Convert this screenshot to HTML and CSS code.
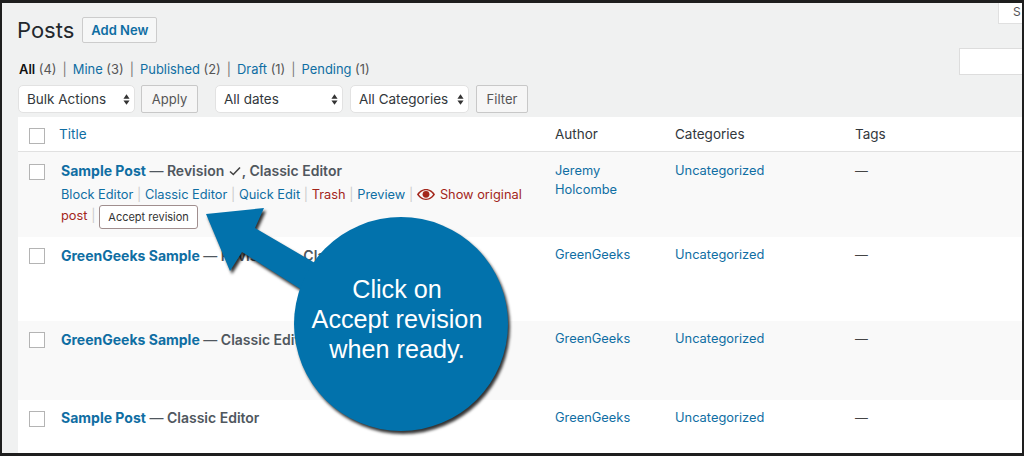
FILE: index.html
```html
<!DOCTYPE html>
<html lang="en">
<head>
<meta charset="utf-8">
<title>Posts</title>
<link rel="stylesheet" href="styles.css">
</head>
<body>
<div class="frame">
  <header class="pagehead">
    <h1 class="title">Posts</h1>
    <a class="addnew">Add New</a>
    <div class="screentab">S</div>
  </header>
  <div class="viewsrow">
    <ul class="views">
      <li><b>All</b> <span class="n">(4)</span></li><li class="pipe">|</li>
      <li><a>Mine</a> <span class="n">(3)</span></li><li class="pipe">|</li>
      <li><a>Published</a> <span class="n">(2)</span></li><li class="pipe">|</li>
      <li><a>Draft</a> <span class="n">(1)</span></li><li class="pipe">|</li>
      <li><a>Pending</a> <span class="n">(1)</span></li>
    </ul>
    <div class="searchbox"></div>
  </div>
  <div class="tablenav">
    <div class="select w-bulk">Bulk Actions<svg class="updown" viewBox="0 0 8 14"><path d="M4 1 7.500 6h-7zM4 13 .5 8h7z"/></svg></div>
    <div class="btn w-apply">Apply</div>
    <div class="select w-dates">All dates<svg class="updown" viewBox="0 0 8 14"><path d="M4 1 7.500 6h-7zM4 13 .5 8h7z"/></svg></div>
    <div class="select w-cats">All Categories<svg class="updown" viewBox="0 0 8 14"><path d="M4 1 7.500 6h-7zM4 13 .5 8h7z"/></svg></div>
    <div class="btn w-filter">Filter</div>
  </div>
  <div class="table">
    <div class="row head">
      <span class="check"></span>
      <a class="th-title">Title</a>
      <span>Author</span><span>Categories</span><span>Tags</span>
    </div>
    <div class="row alt r1">
      <span class="check"></span>
      <div class="cell-title">
        <div class="posttitle"><a>Sample Post</a> <span class="dash">—</span> Revision <svg class="tick" viewBox="0 0 12 10"><path d="M1 5.500 4.300 8.500 11 1.500"/></svg>, Classic Editor</div>
        <div class="actions"><a>Block Editor</a><i>|</i><a>Classic Editor</a><i>|</i><a>Quick Edit</a><i>|</i><a class="red">Trash</a><i>|</i><a>Preview</a><i>|</i><a class="red"><svg class="eye" viewBox="0 0 20 12"><path d="M10 0C5.500 0 2 2.800 0 6c2 3.200 5.500 6 10 6s8-2.800 10-6c-2-3.200-5.500-6-10-6zM10 1.300c3.300 0 6.100 2 7.900 4.700-1.800 2.700-4.600 4.700-7.900 4.700S3.900 8.700 2.100 6C3.900 3.300 6.700 1.300 10 1.300z"/><circle cx="10" cy="5.800" r="3.800"/></svg>Show original post</a><i>|</i><span class="accept">Accept revision</span></div>
      </div>
      <div class="cell-author"><a>Jeremy Holcombe</a></div>
      <div><a>Uncategorized</a></div>
      <div>—</div>
    </div>
    <div class="row r2">
      <span class="check"></span>
      <div class="posttitle"><a>GreenGeeks Sample</a> <span class="dash">—</span> Revision <svg class="tick" viewBox="0 0 12 10"><path d="M1 5.500 4.300 8.500 11 1.500"/></svg>, Classic Editor</div>
      <div><a>GreenGeeks</a></div>
      <div><a>Uncategorized</a></div>
      <div>—</div>
    </div>
    <div class="row alt r3">
      <span class="check"></span>
      <div class="posttitle"><a>GreenGeeks Sample</a> <span class="dash">—</span> Classic Editor</div>
      <div><a>GreenGeeks</a></div>
      <div><a>Uncategorized</a></div>
      <div>—</div>
    </div>
    <div class="row r4">
      <span class="check"></span>
      <div class="posttitle"><a>Sample Post</a> <span class="dash">—</span> Classic Editor</div>
      <div><a>GreenGeeks</a></div>
      <div><a>Uncategorized</a></div>
      <div>—</div>
    </div>
  </div>
</div>
<svg class="callout" viewBox="0 0 1024 456" aria-hidden="true">
  <path d="M206 214 264 208 255 228 320 266 310 295 242 252 230 271Z"/>
  <circle cx="401" cy="324" r="107"/>
</svg>
<div class="callout-text">Click on<br>Accept revision<br>when ready.</div>
</body>
</html>
```
FILE: styles.css
```css
* { box-sizing: border-box; }
html, body { margin: 0; height: 456px; overflow: hidden; }
body {
  position: relative;
  background: #f1f1f1;
  font-family: Inter, "Noto Sans", sans-serif;
  font-size: 12.85px;
  color: #444;
}
a { color: #0f6ea3; text-decoration: none; }
.frame {
  height: 456px;
  border: solid #1e1e1e;
  border-width: 3px 2px 3px 2px;
  padding-left: 16px;
  background: #f0f1f1;
  overflow: hidden;
}
.pagehead { display: flex; align-items: flex-start; height: 45px; }
.title { margin: 14px 0 0 -1px; font-size: 22px; line-height: 26px; font-weight: 400; color: #23282d; }
.addnew {
  margin: 14px 0 0 8px;
  width: 75px; height: 26px;
  display: flex; align-items: center; justify-content: center;
  background: #f6f7f7;
  border: 1px solid #ccc;
  border-radius: 2px;
  font-size: 13px; font-weight: 600;
}
.screentab {
  margin-left: auto;
  width: 24px; height: 21px;
  padding-left: 14px;
  background: #fff;
  border: 1px solid #e0e0e0; border-top: 0; border-right: 0;
  overflow: hidden; white-space: nowrap;
  font-size: 12px; line-height: 18px; color: #555;
}
.viewsrow { display: flex; justify-content: space-between; height: 27px; }
.views { display: flex; list-style: none; margin: 9px 0 0 1px; padding: 0; align-items: center; height: 24px; font-size: 12.9px; color: #555; gap: 5px; }
.views b { font-weight: 600; color: #111; }
.views .n { color: #555; }
.views .pipe { color: #777; padding: 0 1px; }
.searchbox { width: 63px; height: 27px; background: #fff; border: 1px solid #ddd; border-right: 0; }
.tablenav { display: flex; margin-top: 10px; height: 28px; align-items: stretch; }
.select {
  display: flex; align-items: center; justify-content: space-between;
  padding: 0 4px 0 8px;
  background: #fff;
  border: 1px solid #e2e2e2;
  border-radius: 5px;
  font-size: 13.5px; color: #32373c;
}
.updown { width: 7px; height: 13px; fill: #333; }
.btn {
  display: flex; align-items: center; justify-content: center;
  background: #f6f6f6;
  border: 1px solid #c8c8c8;
  border-radius: 2px;
  font-size: 13px; color: #555;
}
.w-bulk { width: 117px; }
.w-apply { width: 57px; margin-left: 6px; }
.w-dates { width: 128px; margin-left: 17px; }
.w-cats { width: 119px; margin-left: 7px; }
.w-filter { width: 52px; margin-left: 7px; }
.table { margin-top: 4px; background: #fff; }
.row {
  display: grid;
  grid-template-columns: 43px 494px 120px 180px 1fr;
  align-items: start;
  line-height: 18px;
}
.check { margin: 2px 0 0 11px; width: 16px; height: 16px; display: block; background: #fff; border: 1px solid #b4b4b4; }
.head { height: 35px; padding-top: 8px; border-bottom: 1px solid #e1e1e1; font-size: 13.5px; color: #32373c; }
.head .check { margin-top: 3px; }
.th-title { margin-left: -2px; font-size: 13.5px; }
.alt { background: #f9f9f9; }
.r1 { height: 85px; padding-top: 9px; line-height: 20px; }
.r1 .check { margin-top: 3px; }
.r2 { height: 84px; padding-top: 9px; }
.r3 { height: 79px; padding-top: 9px; }
.r4 { height: 60px; padding-top: 8px; line-height: 20px; }
.r4 .check { margin-top: 3px; }
.posttitle { font-size: 14px; font-weight: 600; color: #50575e; line-height: 20px; }
.posttitle a { font-weight: 700; }
.dash { font-weight: 400; }
.tick { width: 12px; height: 10px; fill: none; stroke: #444; stroke-width: 1.6; margin: 0 1px; }
.actions { margin-top: 3px; width: 470px; font-size: 12.8px; line-height: 21px; }
.actions i { font-style: normal; color: #ccc; margin: 0 3.7px; }
.red { color: #a3261b; }
.eye { width: 18px; height: 11px; fill: #a3261b; margin-right: 5px; vertical-align: -1px; }
.accept {
  display: inline-block;
  width: 99px; height: 24px;
  background: #fff;
  border: 1px solid #a08e8e;
  border-radius: 3px;
  text-align: center;
  font-size: 11px; line-height: 22px; color: #333;
  vertical-align: -1px;
}
.cell-author { width: 90px; line-height: 19px; }
.callout {
  position: absolute; left: 0; top: 0;
  width: 1024px; height: 456px;
  fill: #0272ac;
  filter: drop-shadow(2px 3px 1.5px rgba(0,0,0,.8));
}
.callout-text {
  position: absolute; left: 287px; top: 274px;
  width: 220px;
  text-align: center;
  font-family: "Liberation Sans", Arial, sans-serif;
  font-size: 25.2px; line-height: 30px;
  color: #fff;
}
```
